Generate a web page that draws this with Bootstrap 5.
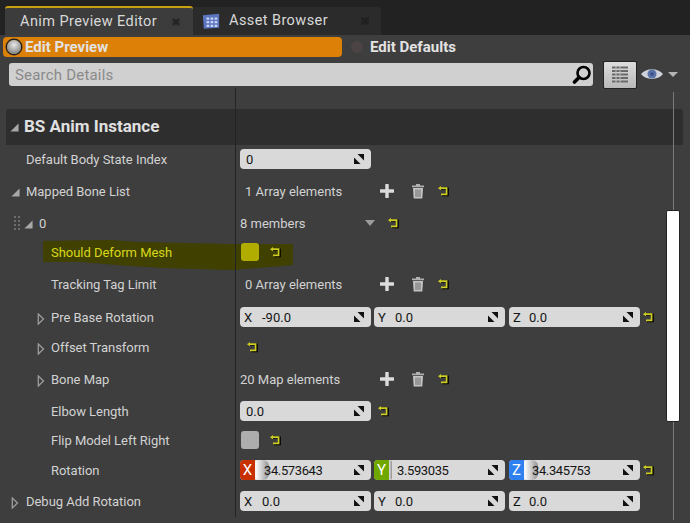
<!DOCTYPE html>
<html lang="en">
<head>
<meta charset="utf-8">
<title>Anim Preview Editor</title>
<link href="https://cdn.jsdelivr.net/npm/bootstrap@5.3.0/dist/css/bootstrap.min.css" rel="stylesheet">
<style>
html,body{width:690px;height:523px;overflow:hidden;margin:0;background:#3e3e3e;font-family:Roboto,"Liberation Sans",sans-serif;font-size:13px;color:#d2d2d2;}
.ue-page{position:relative;width:690px;height:523px;}
.ue-tabs{height:35px;background:#222;padding-left:5px;align-items:flex-end;}
.ue-tab{width:188px;height:29px;font-size:14.5px;letter-spacing:.42px;}
.ue-tab-on{background:#3c3c3c;border-top:2px solid #c8a010;border-radius:3px 3px 0 0;color:#d8d8d8;padding-left:15px;}
.ue-tab-off{height:28px;background:#2b2b2b;border-radius:3px 3px 0 0;color:#d8d8d8;}
.ue-tab-name{flex:1;}
.ue-x{margin-right:13px;}
.ue-x2{margin-right:12px;}
.ue-tico{margin:0 9px;flex:none;}
.ue-modes{height:26px;padding:2px 0 0 3px;font-weight:700;font-size:15px;}
.ue-mode{height:20px;border-radius:4px;color:#e2e2e2;padding-left:4px;}
.ue-mode-on{width:339px;background:#dc8008;}
.ue-mode-off{padding-left:9px;}
.ue-radio{width:14px;height:14px;border-radius:50%;margin-right:4px;flex:none;}
.ue-radio-on{background:radial-gradient(circle at 50% 35%,#e8e8e8,#8d8d8d 70%);box-shadow:0 0 0 1.5px #222;}
.ue-radio-off{width:12px;height:12px;background:#4c4444;margin-right:7px;}
.ue-tools{height:27px;padding:2px 0 0 9px;}
.ue-search{width:584px;height:23px;background:#d0d0d0;border-radius:3px;color:#8a8a8a;font-size:15px;padding:1px 1px 0 6px;}
.ue-search-tx{flex:1;letter-spacing:.2px;}
.ue-gridbtn{width:34px;height:28px;margin:-2px 0 0 10px;background:linear-gradient(#dedede,#b8b8b8);border:1px solid #222;border-radius:2px;}
.ue-eye{margin:1px 0 0 4px;}
.ue-head{height:21px;padding-left:6px;}
.ue-head-l{width:230px;height:100%;border-right:1px solid #232323;}
.ue-band{height:36px;margin:0 7px 0 6px;background:#2e2e2e;border-radius:3px 3px 0 0;}
.ue-band-l{width:230px;height:100%;border-right:1px solid #232323;padding-left:4px;font-weight:700;font-size:17px;color:#e0e0e0;}
.ue-tri{margin-right:5px;flex:none;}
.ue-row{display:flex;align-items:center;margin-left:6px;}
.rh28{height:28px}.rh30{height:30px}.rh32{height:32px}.rh34{height:34px}.rh36{height:36px}
.ue-lab{width:230px;height:100%;border-right:1px solid #232323;flex:none;position:relative;letter-spacing:-.03px;padding-top:2px;}
.pl-a{padding-left:20px}.pl-b{padding-left:5px}.pl-c{padding-left:45px}.pl-d{padding-left:31px}.pl-e{padding-left:8px}
.ue-slot1{width:15px;flex:none;}
.ue-slot2{width:14px;flex:none;}
.ue-val{padding-left:4px;display:flex;align-items:center;height:100%;position:relative;}
.ue-field{position:relative;height:20px;width:131px;background:#d9d9d9;border-radius:4px;color:#151515;padding:2px 0 0 6px;flex:none;overflow:hidden;}
.ue-fvec{padding-left:4px;}
.ue-spin{position:absolute;right:7px;top:5px;}
.ue-ax{width:18px;flex:none;}
.ue-ax-y{width:17px;flex:none;}
.ue-ax-z{width:16px;flex:none;}
.ue-gap{margin-left:3px;}
.ue-gap2{margin-left:4px;}
.ue-vt{width:140px;flex:none;padding-top:2px;}
.ue-vt-m{width:125px;}
.ue-vt-a{padding-left:5px;}
.ue-plus{margin-right:17px;}
.ue-trash{margin-right:13px;}
.ue-chk{width:18px;height:18px;border-radius:3px;margin-left:1px;margin-right:11px;flex:none;}
.ue-chk-y{background:#b0ac00;}
.ue-chk-g{background:#adadad;}
.ue-hl{color:#d8d81a;}
.ue-handle{margin-right:4px;}
.ue-tri0{margin-right:6px;}
.ue-blob{position:absolute;left:0;top:0;pointer-events:none;}
.ue-tag{position:absolute;left:0;top:0;bottom:0;width:15px;color:#fff;font-size:15px;display:flex;align-items:center;justify-content:center;}
.ue-tag-x{background:#c83000}.ue-tag-y{background:#70a800}.ue-tag-z{background:#2f80f0}
.ue-knob{position:absolute;top:0;bottom:0;background:linear-gradient(90deg,#e6e6e6,#f8f8f8 20%,#c8c8c8 60%,#8f8f8f);border-radius:6px;}
.ue-num{position:relative;letter-spacing:-.38px;}
.ue-cv-x{padding-left:24px}.ue-cv-y{padding-left:23px}.ue-cv-z{padding-left:23px}
.k-x{left:13px;width:16px}.k-y{left:13px;width:5px}.k-z{left:13px;width:16px}
.ue-sb-line{position:absolute;left:673px;top:92px;width:1px;height:428px;background:#7a7a7a;}
.ue-sb{position:absolute;left:666px;top:210px;width:14px;height:212px;background:#fff;border:1px solid #222;border-radius:2px;}
</style>
</head>
<body>
<svg width="0" height="0" class="position-absolute">
<defs>
<symbol id="s-reset" viewBox="0 0 11 11"><path d="M1.5 1.6h7.6v6.8H3.4" fill="none" stroke="#000" stroke-width="2" transform="translate(.7 .8)"/><path d="M2 2.2h6.6v6.2H3" fill="none" stroke="#cdcd22" stroke-width="1.7"/><path d="M0 2.2 3 .1v4.2z" fill="#cdcd22"/></symbol>
<symbol id="s-spin" viewBox="0 0 10 10"><path d="M0 3.500V10h6.500z" fill="#111"/><path d="M10 6.500V0H3.500z" fill="#111"/></symbol>
<symbol id="s-plus" viewBox="0 0 14 14"><path d="M7 1v12M1 7h12" stroke="#dcdcdc" stroke-width="3.400" stroke-linecap="round"/></symbol>
<symbol id="s-trash" viewBox="0 0 14 16"><path d="M1 2.500h12v1.800H1zM5 1h4v1.600H5z" fill="#b0b0b0"/><path d="M2 5h10l-.7 10.500H2.700z" fill="#c4c4c4"/><path d="M5 6.500v7.500M7 6.500v7.500M9 6.500v7.500" stroke="#6c6c6c"/></symbol>
<symbol id="s-close" viewBox="0 0 10 10"><rect width="10" height="10" fill="#000" opacity=".12"/><path d="M1.500 1.500l7 7M8.500 1.500l-7 7" stroke="#1f1f1f" stroke-width="2"/></symbol>
<symbol id="s-open" viewBox="0 0 10 10"><path d="M9.500 .5V9.500H.5z" fill="#a8a8a8"/></symbol>
<symbol id="s-shut" viewBox="0 0 8 12"><path d="M1.300 1 6.500 6 1.300 11z" fill="none" stroke="#9c9c9c" stroke-width="1.300"/></symbol>
</defs>
</svg>
<div class="ue-page">
<div class="d-flex ue-tabs">
  <div class="ue-tab ue-tab-on d-flex align-items-center"><span class="ue-tab-name">Anim Preview Editor</span><svg class="ue-x" width="8" height="8"><use href="#s-close"/></svg></div>
  <div class="ue-tab ue-tab-off d-flex align-items-center">
    <svg class="ue-tico" width="18" height="17" viewBox="0 0 20 18"><path d="M1 2 19 .5V16L2 17z" fill="#5a74c0"/><path d="M5 4.500h3v2.500H5zM9.500 4.500h3v2.500h-3zM14 4.500h3v2.500h-3zM5 8.500h3V11H5zM9.500 8.500h3V11h-3zM14 8.500h3V11h-3zM5 12.500h3V15H5zM9.500 12.500h3V15h-3zM14 12.500h3V15h-3z" fill="#c6d2f2"/></svg>
    <span class="ue-tab-name">Asset Browser</span><svg class="ue-x2" width="8" height="8"><use href="#s-close"/></svg></div>
</div>
<div class="d-flex ue-modes">
  <div class="ue-mode ue-mode-on d-flex align-items-center"><span class="ue-radio ue-radio-on"></span>Edit Preview</div>
  <div class="ue-mode ue-mode-off d-flex align-items-center"><span class="ue-radio ue-radio-off"></span>Edit Defaults</div>
</div>
<div class="d-flex ue-tools">
  <div class="ue-search d-flex align-items-center"><span class="ue-search-tx">Search Details</span>
    <svg width="20" height="20" viewBox="0 0 20 20"><circle cx="11.500" cy="8" r="6" fill="none" stroke="#000" stroke-width="2.600"/><path d="M7 12.500 2.500 17" stroke="#000" stroke-width="3.600" stroke-linecap="round"/></svg></div>
  <div class="ue-gridbtn d-flex align-items-center justify-content-center">
    <svg width="18" height="19" viewBox="0 0 18 19"><path d="M1 1.500h16M1 5h16M1 8.500h16M1 12h16M1 15.500h16" stroke="#6a6a6a" stroke-width="2"/><path d="M5 0v18M9 0v18" stroke="#bdbdbd"/></svg></div>
  <svg class="ue-eye" width="38" height="20" viewBox="0 0 38 20"><path d="M0 10C5 3.500 17 3.500 22 10 17 16.500 5 16.500 0 10z" fill="#cfd2da"/><circle cx="11" cy="10" r="4.500" fill="#5a74a8"/><circle cx="11" cy="10" r="1.800" fill="#3a5088"/><path d="M27 8h10l-5 5z" fill="#b4b4b4"/></svg>
</div>
<div class="ue-head"><div class="ue-head-l"></div></div>
<div class="ue-band d-flex align-items-center">
  <div class="ue-band-l d-flex align-items-center"><svg class="ue-tri" width="9" height="9"><use href="#s-open"/></svg><span class="ms-0">BS Anim Instance</span></div>
</div>

<svg class="ue-blob" width="300" height="280" viewBox="0 0 300 280"><path d="M43 241 110 240 140 242 233 244 293 244 293 265 233 270 163 268 117 265 80 262 43 262z" fill="#404000"/></svg>

<div class="ue-row rh28"><div class="ue-lab d-flex align-items-center pl-a">Default Body State Index</div><div class="ue-val"><div class="ue-field d-flex align-items-center">0<svg class="ue-spin" width="10" height="10"><use href="#s-spin"/></svg></div></div></div>

<div class="ue-row rh36"><div class="ue-lab d-flex align-items-center pl-b"><span class="ue-slot1"><svg width="9" height="9"><use href="#s-open"/></svg></span>Mapped Bone List</div><div class="ue-val"><span class="ue-vt ue-vt-a">1 Array elements</span><svg class="ue-plus" width="14" height="14"><use href="#s-plus"/></svg><svg class="ue-trash" width="14" height="16"><use href="#s-trash"/></svg><svg width="11" height="11"><use href="#s-reset"/></svg></div></div>

<div class="ue-row rh28"><div class="ue-lab d-flex align-items-center pl-e"><svg class="ue-handle" width="6" height="18" viewBox="0 0 6 18"><path d="M0 1h2v2H0zM4 1h2v2H4zM0 5h2v2H0zM4 5h2v2H4zM0 9h2v2H0zM4 9h2v2H4zM0 13h2v2H0zM4 13h2v2H4z" fill="#6c6c6c"/></svg><svg class="ue-tri0" width="9" height="9"><use href="#s-open"/></svg>0</div><div class="ue-val"><span class="ue-vt ue-vt-m">8 members</span><svg width="10" height="6" viewBox="0 0 10 6" class="me-3"><path d="M0 0h10L5 6z" fill="#9c9c9c"/></svg><svg width="11" height="11"><use href="#s-reset"/></svg></div></div>

<div class="ue-row rh30 ue-hl"><div class="ue-lab d-flex align-items-center pl-c">Should Deform Mesh</div><div class="ue-val"><span class="ue-chk ue-chk-y"></span><svg width="11" height="11"><use href="#s-reset"/></svg></div></div>

<div class="ue-row rh34"><div class="ue-lab d-flex align-items-center pl-c">Tracking Tag Limit</div><div class="ue-val"><span class="ue-vt ue-vt-a">0 Array elements</span><svg class="ue-plus" width="14" height="14"><use href="#s-plus"/></svg><svg class="ue-trash" width="14" height="16"><use href="#s-trash"/></svg><svg width="11" height="11"><use href="#s-reset"/></svg></div></div>

<div class="ue-row rh32"><div class="ue-lab d-flex align-items-center pl-d"><span class="ue-slot2"><svg width="8" height="12"><use href="#s-shut"/></svg></span>Pre Base Rotation</div><div class="ue-val">
  <div class="ue-field ue-fvec d-flex align-items-center"><span class="ue-ax">X</span>-90.0<svg class="ue-spin" width="10" height="10"><use href="#s-spin"/></svg></div>
  <div class="ue-field ue-fvec ue-gap d-flex align-items-center"><span class="ue-ax-y">Y</span>0.0<svg class="ue-spin" width="10" height="10"><use href="#s-spin"/></svg></div>
  <div class="ue-field ue-fvec ue-gap2 d-flex align-items-center"><span class="ue-ax-z">Z</span>0.0<svg class="ue-spin" width="10" height="10"><use href="#s-spin"/></svg></div>
  <svg class="ms-1" width="11" height="11"><use href="#s-reset"/></svg></div></div>

<div class="ue-row rh28"><div class="ue-lab d-flex align-items-center pl-d"><span class="ue-slot2"><svg width="8" height="12"><use href="#s-shut"/></svg></span>Offset Transform</div><div class="ue-val"><svg class="ms-2" width="11" height="11"><use href="#s-reset"/></svg></div></div>

<div class="ue-row rh36"><div class="ue-lab d-flex align-items-center pl-d"><span class="ue-slot2"><svg width="8" height="12"><use href="#s-shut"/></svg></span>Bone Map</div><div class="ue-val"><span class="ue-vt">20 Map elements</span><svg class="ue-plus" width="14" height="14"><use href="#s-plus"/></svg><svg class="ue-trash" width="14" height="16"><use href="#s-trash"/></svg><svg width="11" height="11"><use href="#s-reset"/></svg></div></div>

<div class="ue-row rh28"><div class="ue-lab d-flex align-items-center pl-c">Elbow Length</div><div class="ue-val"><div class="ue-field d-flex align-items-center">0.0<svg class="ue-spin" width="10" height="10"><use href="#s-spin"/></svg></div><svg class="ms-2" width="11" height="11"><use href="#s-reset"/></svg></div></div>

<div class="ue-row rh30"><div class="ue-lab d-flex align-items-center pl-c">Flip Model Left Right</div><div class="ue-val"><span class="ue-chk ue-chk-g"></span><svg width="11" height="11"><use href="#s-reset"/></svg></div></div>

<div class="ue-row rh30"><div class="ue-lab d-flex align-items-center pl-c">Rotation</div><div class="ue-val">
  <div class="ue-field ue-cv-x d-flex align-items-center"><span class="ue-knob k-x"></span><span class="ue-tag ue-tag-x">X</span><span class="ue-num">34.573643</span><svg class="ue-spin" width="10" height="10"><use href="#s-spin"/></svg></div>
  <div class="ue-field ue-cv-y ue-gap d-flex align-items-center"><span class="ue-knob k-y"></span><span class="ue-tag ue-tag-y">Y</span><span class="ue-num">3.593035</span><svg class="ue-spin" width="10" height="10"><use href="#s-spin"/></svg></div>
  <div class="ue-field ue-cv-z ue-gap2 d-flex align-items-center"><span class="ue-knob k-z"></span><span class="ue-tag ue-tag-z">Z</span><span class="ue-num">34.345753</span><svg class="ue-spin" width="10" height="10"><use href="#s-spin"/></svg></div>
  <svg class="ms-1" width="11" height="11"><use href="#s-reset"/></svg></div></div>

<div class="ue-row rh32"><div class="ue-lab d-flex align-items-center pl-b"><span class="ue-slot1"><svg width="8" height="12"><use href="#s-shut"/></svg></span>Debug Add Rotation</div><div class="ue-val">
  <div class="ue-field ue-fvec d-flex align-items-center"><span class="ue-ax">X</span>0.0<svg class="ue-spin" width="10" height="10"><use href="#s-spin"/></svg></div>
  <div class="ue-field ue-fvec ue-gap d-flex align-items-center"><span class="ue-ax-y">Y</span>0.0<svg class="ue-spin" width="10" height="10"><use href="#s-spin"/></svg></div>
  <div class="ue-field ue-fvec ue-gap2 d-flex align-items-center"><span class="ue-ax-z">Z</span>0.0<svg class="ue-spin" width="10" height="10"><use href="#s-spin"/></svg></div></div></div>

<div class="ue-sb-line"></div>
<div class="ue-sb"></div>
</div>
</body>
</html>
